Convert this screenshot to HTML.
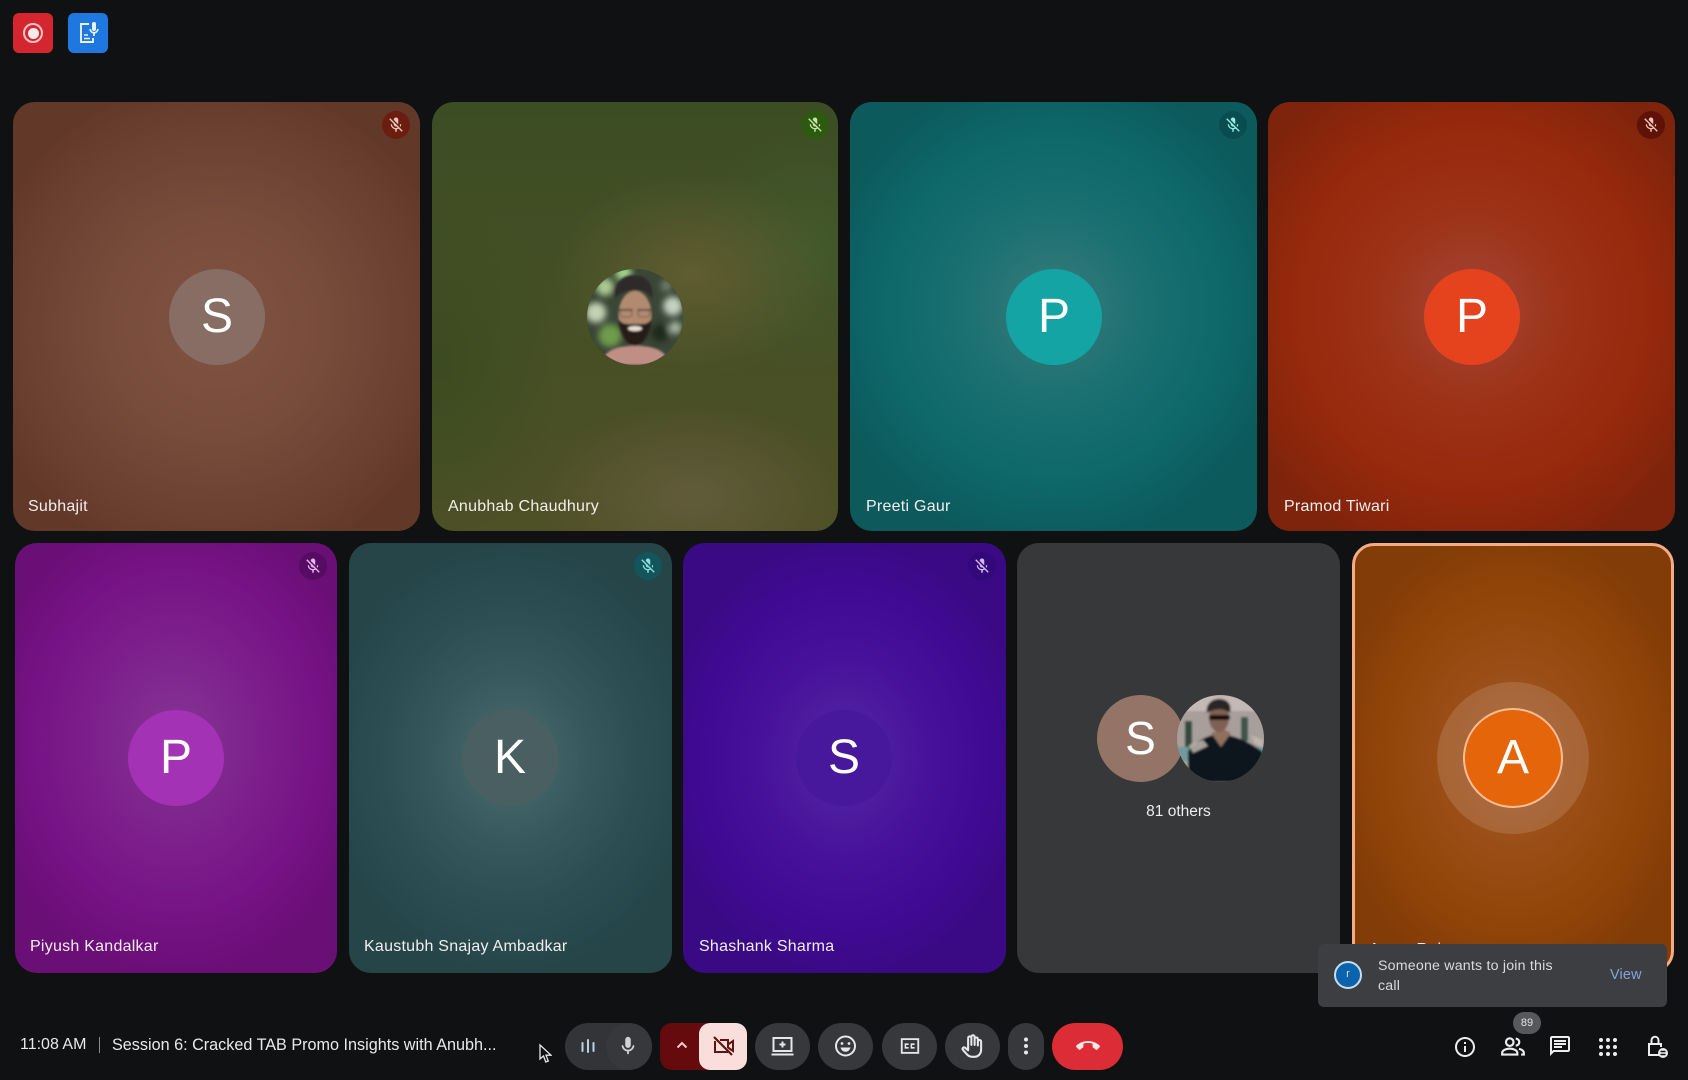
<!DOCTYPE html>
<html><head><meta charset="utf-8"><title>Meet</title>
<style>
html,body{margin:0;padding:0;background:#101112;width:1688px;height:1080px;overflow:hidden;font-family:"Liberation Sans",sans-serif;color:#fff}
.a{position:absolute}
.t{position:absolute;border-radius:22px;overflow:hidden;box-sizing:border-box}
.n{position:absolute;font-size:16px;line-height:20px;color:#f2eeee;white-space:nowrap;letter-spacing:.25px}
.av{position:absolute;width:96px;height:96px;border-radius:50%;text-align:center;font-size:48px;line-height:96px;color:#fff}
.m{position:absolute;width:28px;height:28px;border-radius:50%}
.m svg{position:absolute;left:5px;top:5px;width:18px;height:18px}
.b{position:absolute;top:1023px;height:47px;background:#36383b;border-radius:24px}
.b svg{position:absolute}
</style></head><body>
<svg width="0" height="0" style="position:absolute"><defs>
<symbol id="moff" viewBox="0 0 24 24"><path d="M19 11h-1.700c0 .740-.160 1.430-.430 2.050l1.230 1.230c.560-.980.900-2.090.900-3.280zm-4.020.170c0-.060.020-.110.020-.170V5c0-1.660-1.340-3-3-3S9 3.340 9 5v.180l5.980 5.990zM4.270 3L3 4.270l6.010 6.010V11c0 1.660 1.330 3 2.990 3 .220 0 .440-.030.650-.080l1.660 1.660c-.710.330-1.500.520-2.310.520-2.760 0-5.300-2.100-5.300-5.100H5c0 3.410 2.720 6.230 6 6.720V21h2v-3.280c.910-.130 1.770-.450 2.540-.900L19.730 21 21 19.730 4.270 3z"/></symbol>
<filter id="bl"><feGaussianBlur stdDeviation="5"/></filter>
<filter id="bl2"><feGaussianBlur stdDeviation="1"/></filter>
<filter id="bl3"><feGaussianBlur stdDeviation="1.800"/></filter>
</defs></svg>

<!-- top badges -->
<div class="a" style="left:13px;top:13px;width:40px;height:40px;background:#d5262f;border-radius:6px"></div>
<div class="a" style="left:23px;top:23px;width:16px;height:16px;border:2px solid #f5c4c6;border-radius:50%"></div>
<div class="a" style="left:27.500px;top:27.500px;width:11px;height:11px;background:#fbeaea;border-radius:50%"></div>
<div class="a" style="left:68px;top:13px;width:40px;height:40px;background:#1f77e0;border-radius:6px"></div>
<svg class="a" style="left:68px;top:13px" width="40" height="40" viewBox="0 0 40 40" fill="none" stroke="#eaf2fd" stroke-width="1.900"><path d="M25 25v4H13V11h8"/><path d="M16 22h4M16 25.500h6" stroke-width="1.600"/><rect x="24" y="9" width="4" height="9" rx="2" fill="#eaf2fd" stroke="none"/><path d="M22 16c1 5 7 5 8 0M26 20v3" stroke-width="1.700"/></svg>

<!-- Row 1 -->
<div class="t" style="left:13px;top:102px;width:407px;height:429px;background:radial-gradient(ellipse 60% 58% at 50% 52%,#805343 0%,#784c3b 45%,#6c4031 80%,#623829 100%)">
 <div class="av" style="left:156px;top:167px;background:#876d63">S</div>
 <div class="m" style="left:369px;top:9px;background:#6b1d10"><svg fill="#f2c6ba"><use href="#moff"/></svg></div>
 <div class="n" style="left:15px;top:395px">Subhajit</div>
</div>
<div class="t" style="left:432px;top:102px;width:406px;height:429px;background:radial-gradient(ellipse 34% 24% at 64% 40%,rgba(98,94,50,.9),rgba(98,94,50,0)),radial-gradient(ellipse 38% 22% at 64% 92%,rgba(100,92,60,.9),rgba(100,92,60,0)),radial-gradient(ellipse 28% 28% at 92% 34%,rgba(66,94,46,.7),rgba(66,94,46,0)),radial-gradient(ellipse 30% 40% at 2% 62%,rgba(52,74,28,.6),rgba(52,74,28,0)),linear-gradient(180deg,#3c4d24 0%,#464f25 50%,#4e5026 100%)">
 <div class="m" style="left:369px;top:9px;background:#2c5a0f"><svg fill="#c5e6a8"><use href="#moff"/></svg></div>
 <div class="n" style="left:16px;top:395px">Anubhab Chaudhury</div>
 <div style="position:absolute;left:155px;top:167px;width:96px;height:96px;border-radius:50%;overflow:hidden;background:#34402e">
  <svg width="96" height="96" viewBox="0 0 150 150">
   <rect width="150" height="150" fill="#3a4636"/>
   <g filter="url(#bl)">
    <circle cx="57" cy="6" r="13" fill="#a2d08a"/><circle cx="28" cy="28" r="14" fill="#a9c992"/><circle cx="14" cy="68" r="16" fill="#c2d3b3"/><circle cx="36" cy="104" r="18" fill="#6f9c4b"/><circle cx="134" cy="58" r="15" fill="#c4d2c4"/><circle cx="124" cy="26" r="9" fill="#707f6c"/><circle cx="138" cy="92" r="10" fill="#a6b5a4"/><circle cx="114" cy="100" r="14" fill="#1f2a1b"/>
   </g>
   <g filter="url(#bl3)">
    <path d="M44 46c-3-26 13-38 32-36 18 1 28 14 26 36-7-10-15-13-29-12-13 0-22 3-29 12z" fill="#2f2b29"/>
    <ellipse cx="75" cy="72" rx="26" ry="38" fill="#b28a70"/>
    <path d="M22 150c3-22 22-30 53-30s50 8 55 30z" fill="#bf8e84"/>
    <path d="M49 78c3 28 15 42 26 42s23-14 26-42c-7 10-14 8-26 8s-19 2-26-8z" fill="#251b17"/>
    <ellipse cx="75" cy="93" rx="11" ry="4" fill="#eadfd6"/>
    <path d="M49 64h22M79 64h22" stroke="#4a3c33" stroke-width="3"/>
    <rect x="52" y="64" width="18" height="11" rx="4" fill="none" stroke="#6a5a50" stroke-width="1.600"/><rect x="80" y="64" width="18" height="11" rx="4" fill="none" stroke="#6a5a50" stroke-width="1.600"/>
   </g>
  </svg>
 </div>
</div>
<div class="t" style="left:850px;top:102px;width:407px;height:429px;background:radial-gradient(ellipse 58% 56% at 50% 48%,#3a7d7d 0%,#1b7071 38%,#0e6769 72%,#0c5a5c 100%)">
 <div class="av" style="left:156px;top:167px;background:#14a4a4">P</div>
 <div class="m" style="left:369px;top:9px;background:#0a4d50"><svg fill="#9ae9e2"><use href="#moff"/></svg></div>
 <div class="n" style="left:16px;top:395px">Preeti Gaur</div>
</div>
<div class="t" style="left:1268px;top:102px;width:407px;height:429px;background:radial-gradient(ellipse 62% 60% at 50% 48%,#a3473a 0%,#9d3216 38%,#97290c 70%,#7f240c 100%)">
 <div class="av" style="left:156px;top:167px;background:#e5431e">P</div>
 <div class="m" style="left:369px;top:9px;background:#5f1207"><svg fill="#f0c6bc"><use href="#moff"/></svg></div>
 <div class="n" style="left:16px;top:395px">Pramod Tiwari</div>
</div>

<!-- Row 2 -->
<div class="t" style="left:15px;top:543px;width:322px;height:430px;background:radial-gradient(ellipse 60% 55% at 50% 46%,#863594 0%,#7c1f8b 45%,#761285 75%,#6a0f76 100%)">
 <div class="av" style="left:113px;top:167px;background:#a333b4">P</div>
 <div class="m" style="left:284px;top:9px;background:#560c63"><svg fill="#e9b6f0"><use href="#moff"/></svg></div>
 <div class="n" style="left:15px;top:394px">Piyush Kandalkar</div>
</div>
<div class="t" style="left:349px;top:543px;width:323px;height:430px;background:radial-gradient(ellipse 58% 50% at 50% 50%,#4c6c6e 0%,#37595d 40%,#2c4e52 70%,#254549 100%)">
 <div class="av" style="left:113px;top:167px;background:#4a5f62">K</div>
 <div class="m" style="left:285px;top:9px;background:#12565b"><svg fill="#8fe0dc"><use href="#moff"/></svg></div>
 <div class="n" style="left:15px;top:394px">Kaustubh Snajay Ambadkar</div>
</div>
<div class="t" style="left:683px;top:543px;width:323px;height:430px;background:radial-gradient(ellipse 58% 52% at 50% 50%,#5527a2 0%,#47129a 45%,#400a93 75%,#390a84 100%)">
 <div class="av" style="left:113px;top:167px;background:#47189c">S</div>
 <div class="m" style="left:285px;top:9px;background:#33087a"><svg fill="#d4bdf5"><use href="#moff"/></svg></div>
 <div class="n" style="left:16px;top:394px">Shashank Sharma</div>
</div>
<div class="t" style="left:1017px;top:543px;width:323px;height:430px;background:#363839">
 <div class="av" style="left:80px;top:152px;width:87px;height:87px;line-height:87px;background:#957468;font-size:46px">S</div>
 <div style="position:absolute;left:160px;top:152px;width:87px;height:87px;border-radius:50%;overflow:hidden;background:#a59a97">
  <svg width="87" height="87" viewBox="0 0 87 87"><g filter="url(#bl2)">
   <rect width="87" height="87" fill="#a89e9a"/>
   <rect width="87" height="16" fill="#c4bab5"/>
   <rect x="8" y="26" width="7" height="26" fill="#33493f"/><rect x="64" y="22" width="7" height="24" fill="#3e544c"/>
   <rect y="52" width="87" height="14" fill="#6f9a9c"/>
   <path d="M11 87V56c8-10 20-16 31-17 14 1 28 6 44 18v30z" fill="#10171a"/>
   <path d="M12 50l14-5 5 6-15 7zM74 40l12 5v8l-9-5z" fill="#c2b8b0" opacity=".85"/>
   <path d="M34 38l10 14 10-14-8-4z" fill="#8e6f5c"/>
   <ellipse cx="42" cy="23" rx="10" ry="14" fill="#7f6152"/>
   <path d="M30 18c-2-10 7-15 14-14 8 1 11 7 9 14-6-5-15-5-23 0z" fill="#2a2725"/>
   <rect x="32" y="20" width="21" height="5" rx="2" fill="#15110f"/>
  </g></svg>
 </div>
 <div style="position:absolute;left:0;width:323px;top:259px;text-align:center;font-size:15.500px;line-height:20px;color:#eceded">81 others</div>
</div>
<div class="t" style="left:1352px;top:543px;width:322px;height:430px;border:3px solid #f5ab83;background:radial-gradient(ellipse 58% 55% at 50% 50%,#a25a2e 0%,#9a4e16 40%,#924508 70%,#823c07 100%)">
 <div class="n" style="left:14px;top:394px">Aman Raj</div>
</div>
<div class="a" style="left:1437px;top:682px;width:152px;height:152px;border-radius:50%;background:rgba(255,255,255,.13)"></div>
<div class="av" style="left:1463px;top:708px;width:100px;height:100px;line-height:96px;box-sizing:border-box;border:2px solid #fdbd94;background:#e5650a">A</div>

<!-- toast -->
<div class="a" style="left:1318px;top:944px;width:349px;height:63px;background:#3c3e41;border-radius:6px"></div>
<div class="a" style="left:1334px;top:961px;width:28px;height:28px;box-sizing:border-box;border:2px solid #c8dcec;border-radius:50%;background:#0b63ab;text-align:center;font-size:11px;line-height:23px;color:#cfe2f2">r</div>
<div class="a" style="left:1378px;top:956px;width:200px;font-size:14.200px;line-height:20px;color:#d9dadb;letter-spacing:.2px">Someone wants to join this<br>call</div>
<div class="a" style="left:1610px;top:965px;font-size:14.400px;line-height:20px;color:#7fa6dc;letter-spacing:.2px">View</div>

<!-- left info -->
<div class="a" style="left:20px;top:1035px;font-size:16px;line-height:20px;color:#e8e9ea;white-space:nowrap">11:08 AM</div>
<div class="a" style="left:99px;top:1037px;width:1px;height:16px;background:#8a8b8d"></div>
<div class="a" style="left:112px;top:1035px;font-size:16.200px;line-height:20px;color:#e8e9ea;white-space:nowrap">Session 6: Cracked TAB Promo Insights with Anubh...</div>
<svg class="a" style="left:538px;top:1043px" width="14" height="22" viewBox="0 0 14 22"><path d="M2 2v14l3.500-3 2.300 6 2.500-1-2.300-5.800H13z" fill="#111" stroke="#e6e6e6" stroke-width="1.300"/></svg>

<!-- controls -->
<div class="b" style="left:565px;width:86px;background:#323437"></div>
<div class="b" style="left:606px;width:46px;background:#36383b"></div>
<svg class="a" style="left:579px;top:1037px" width="18" height="18" viewBox="0 0 18 18" fill="#bcd0ea"><rect x="2.500" y="5" width="2" height="10" rx="1"/><rect x="8" y="2" width="2" height="14" rx="1"/><rect x="13.500" y="5" width="2" height="10" rx="1"/></svg>
<svg class="a" style="left:617px;top:1035px" width="22" height="22" viewBox="0 0 24 24" fill="#cfd1d3"><path d="M12 14c1.660 0 3-1.340 3-3V5c0-1.660-1.340-3-3-3S9 3.340 9 5v6c0 1.660 1.340 3 3 3zm5.910-3c-.490 0-.900.360-.980.850C16.520 14.200 14.470 16 12 16s-4.520-1.800-4.930-4.150c-.080-.490-.490-.850-.980-.850-.610 0-1.090.540-1 1.140.490 3 2.890 5.350 5.910 5.780V20c0 .550.450 1 1 1s1-.450 1-1v-2.080c3.020-.430 5.420-2.780 5.910-5.780.100-.600-.390-1.140-1-1.140z"/></svg>

<div class="a" style="left:660px;top:1023px;width:50px;height:47px;background:#650a0d;border-radius:12px 0 0 12px"></div>
<svg class="a" style="left:675px;top:1040px" width="14" height="10" viewBox="0 0 14 10" fill="none" stroke="#f5c9c9" stroke-width="2"><path d="M2.500 7.500L7 3l4.500 4.500"/></svg>
<div class="a" style="left:699px;top:1023px;width:48px;height:47px;background:#f9dedc;border-radius:11px"></div>
<svg class="a" style="left:711px;top:1034px" width="24" height="24" viewBox="0 0 24 24" fill="none" stroke="#601410" stroke-width="2"><path d="M4 7v11h13M9 6h8v8"/><path d="M17 10.500l5-3.500v10l-5-3.500"/><path d="M3 3l18 18" stroke-width="2.200"/></svg>

<div class="b" style="left:755px;width:55px"></div>
<svg class="a" style="left:770px;top:1034px" width="25" height="24" viewBox="0 0 24 24" fill="none" stroke="#e6e7e8" stroke-width="2"><rect x="3" y="4" width="18" height="13"/><path d="M1 20.500h22"/><path d="M12 7.500v6M9 10.500h6"/></svg>
<div class="b" style="left:818px;width:55px"></div>
<svg class="a" style="left:833px;top:1034px" width="25" height="24" viewBox="0 0 24 24" fill="none" stroke="#e6e7e8" stroke-width="2"><circle cx="12" cy="12" r="9.500"/><path d="M7 13.500h10c-.800 3-2.800 4.300-5 4.300S7.800 16.500 7 13.500z" fill="#e6e7e8" stroke="none"/><circle cx="8.500" cy="9.500" r="1.400" fill="#e6e7e8" stroke="none"/><circle cx="15.500" cy="9.500" r="1.400" fill="#e6e7e8" stroke="none"/></svg>
<div class="b" style="left:882px;width:55px"></div>
<svg class="a" style="left:899px;top:1035px" width="22" height="22" viewBox="0 0 24 24" fill="none" stroke="#e6e7e8" stroke-width="2"><rect x="3" y="4.500" width="18" height="15"/><path d="M10.500 10H7v4h3.500M17 10h-3.500v4H17" stroke-width="1.700"/></svg>
<div class="b" style="left:945px;width:55px"></div>
<svg class="a" style="left:960px;top:1033px" width="26" height="26" viewBox="0 0 24 24" fill="none" stroke="#e6e7e8" stroke-width="1.900" stroke-linecap="round" stroke-linejoin="round"><path d="M7.500 13V5.500M10.500 11V3M13.500 11V3.500M16.500 11.500V5.500M19.500 15V8c0-2-3-2-3 0M16.500 5.500c0-1.800-3-1.800-3 0M13.500 3.500c0-1.900-3-1.900-3 0M10.500 4.500c0-1.800-3-1.800-3 0"/><path d="M7.500 13v3l-2.700-2.300c-1.500-1.200-3.200.500-2 1.900 2 2.400 3.500 4.100 4.700 5.100 1.100.900 2.500 1.300 4.500 1.300h1c4 0 6.500-3 6.500-6.500"/></svg>
<div class="b" style="left:1008px;width:36px"></div>
<svg class="a" style="left:1014px;top:1034px" width="24" height="24" viewBox="0 0 24 24" fill="#e6e7e8"><circle cx="12" cy="5.500" r="2"/><circle cx="12" cy="12" r="2"/><circle cx="12" cy="18.500" r="2"/></svg>
<div class="b" style="left:1052px;width:71px;background:#dc2c36"></div>
<svg class="a" style="left:1076px;top:1034px" width="24" height="24" viewBox="0 0 24 24" fill="#fbe4e4"><path d="M12 9c-1.600 0-3.150.250-4.600.720v3.100c0 .390-.230.740-.560.900-.980.490-1.870 1.120-2.660 1.850-.180.180-.430.280-.700.280-.280 0-.530-.110-.710-.290L.290 13.080c-.180-.170-.290-.420-.290-.700 0-.280.110-.530.290-.710C3.340 8.780 7.460 7 12 7s8.660 1.780 11.710 4.670c.180.180.290.430.290.710 0 .280-.110.530-.290.710l-2.480 2.480c-.180.180-.430.290-.710.290-.270 0-.520-.110-.700-.280-.790-.740-1.690-1.360-2.670-1.850-.330-.160-.560-.500-.560-.900v-3.100C15.150 9.250 13.600 9 12 9z"/></svg>

<!-- right icons -->
<svg class="a" style="left:1453px;top:1035px" width="24" height="24" viewBox="0 0 24 24" fill="#eceded"><path d="M11 7h2v2h-2zm0 4h2v6h-2zm1-9C6.480 2 2 6.480 2 12s4.480 10 10 10 10-4.480 10-10S17.520 2 12 2zm0 18c-4.410 0-8-3.590-8-8s3.590-8 8-8 8 3.590 8 8-3.590 8-8 8z"/></svg>
<svg class="a" style="left:1500px;top:1034px" width="26" height="26" viewBox="0 0 24 24" fill="none" stroke="#eceded" stroke-width="2"><circle cx="9" cy="7.500" r="3.500"/><path d="M2 19v-1.500c0-2.500 3.500-4 7-4s7 1.500 7 4V19z"/><path d="M14.500 4.200c2 .300 3.300 1.600 3.300 3.300s-1.300 3-3.300 3.300M17.500 13.700c2.500.600 4.500 1.800 4.500 3.800V19h-2.500"/></svg>
<div class="a" style="left:1513px;top:1012px;width:28px;height:22px;border-radius:11px;background:#56585b;text-align:center;font-size:11px;line-height:22px;color:#e2e3e4">89</div>
<svg class="a" style="left:1548px;top:1034px" width="24" height="24" viewBox="0 0 24 24" fill="#eceded"><path d="M20 2H4c-1.100 0-2 .900-2 2v18l4-4h14c1.100 0 2-.900 2-2V4c0-1.100-.900-2-2-2zm0 14H5.170L4 17.170V4h16v12zM6 12h8v2H6zm0-3h12v2H6zm0-3h12v2H6z"/></svg>
<svg class="a" style="left:1596px;top:1035px" width="24" height="24" viewBox="0 0 24 24" fill="#eceded"><circle cx="5" cy="5" r="2"/><circle cx="12" cy="5" r="2"/><circle cx="19" cy="5" r="2"/><circle cx="5" cy="12" r="2"/><circle cx="12" cy="12" r="2"/><circle cx="19" cy="12" r="2"/><circle cx="5" cy="19" r="2"/><circle cx="12" cy="19" r="2"/><circle cx="19" cy="19" r="2"/></svg>
<svg class="a" style="left:1645px;top:1034px" width="24" height="26" viewBox="0 0 24 26" fill="none" stroke="#eceded" stroke-width="2"><path d="M14 21H4V10h12v3"/><path d="M6.500 10V6.500c0-2.200 1.500-3.700 3.500-3.700s3.500 1.500 3.500 3.700V10"/><circle cx="18" cy="19" r="5" fill="#eceded" stroke="none"/><path d="M15.500 17.500h5M15.500 20.500h5" stroke="#101112" stroke-width="1.500"/></svg>
</body></html>
